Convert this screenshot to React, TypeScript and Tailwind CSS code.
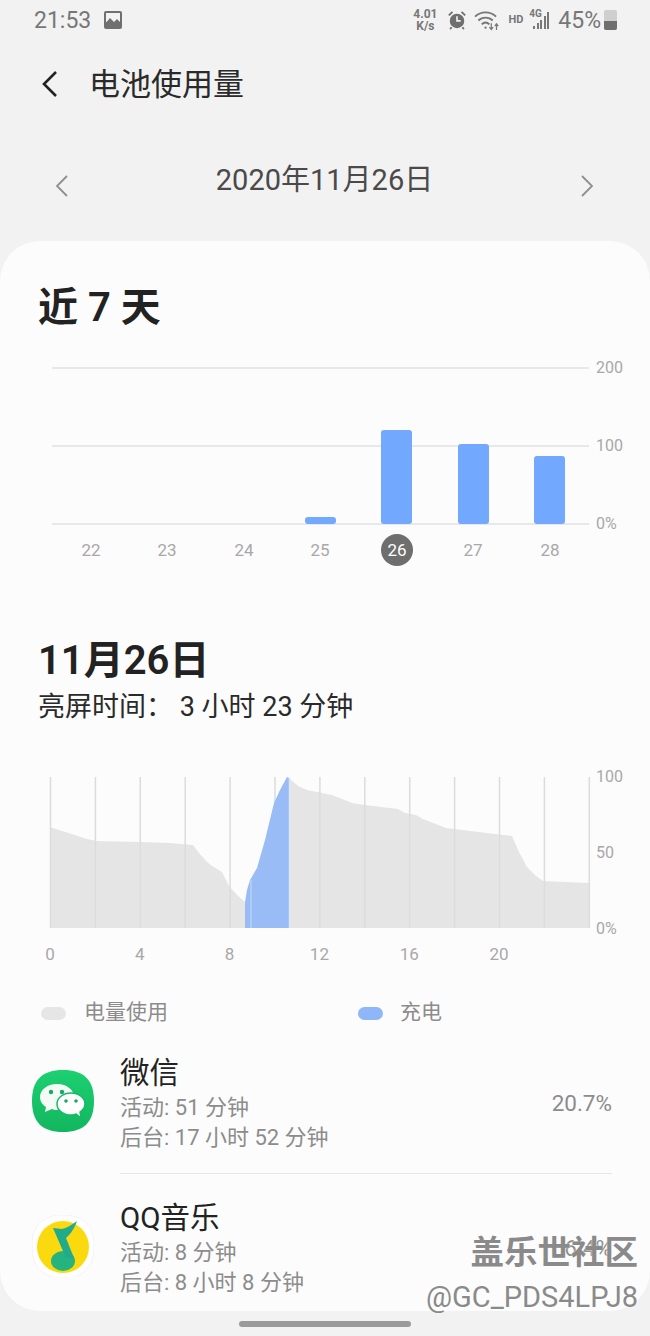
const days = [22, 23, 24, 25, 26, 27, 28];
const dayX = [91, 167, 244, 320, 397, 473, 550];
const bars = [
  { x: 305, top: 517 },
  { x: 381, top: 430 },
  { x: 458, top: 444 },
  { x: 534, top: 456 },
];
const hours = Array.from({ length: 13 }, (_, i) => 50.5 + i * 44.9);

const greyLeft =
  'M50 928 L50 827 L62 831 L75 835 L87 839 L97 841 L141 842 L170 843 L193 845 L199 853 L207 862 L212 866 L222 872 L229 886 L238 896 L245 902 L245 928 Z';
const blueArea =
  'M245 928 L245 902 L247 890 L250 880 L257 868 L265 840 L274 803 L280 790 L287 777 L289 778 L289 928 Z';
const greyRight =
  'M289 928 L289 778 L298 786 L307 790 L332 795 L342 799 L352 803 L365 805 L398 809 L405 813 L416 815 L423 819 L446 828 L470 831 L512 836 L518 850 L527 867 L536 876 L543 881 L565 882 L589 883 L589 928 Z';

function BarChart() {
  return (
    <svg viewBox="0 350 650 220" className="block w-[650px] h-[220px]">
      {[368, 446, 524].map((y) => (
        <line key={y} x1="52" x2="589" y1={y} y2={y} stroke="#e2e2e2" strokeWidth="1.5" />
      ))}
      {bars.map((b) => (
        <rect key={b.x} x={b.x} y={b.top} width="31" height={524 - b.top} rx="3" fill="#73a8ff" />
      ))}
      {[
        ['200', 368],
        ['100', 446],
        ['0%', 524],
      ].map(([t, y]) => (
        <text key={t} x="596" y={Number(y) + 5} fontSize="16" fill="#a8a8a8">
          {t}
        </text>
      ))}
      <circle cx="397" cy="550" r="16" fill="#6e6e6e" />
      {days.map((d, i) => (
        <text
          key={d}
          x={dayX[i]}
          y="556"
          fontSize="17"
          textAnchor="middle"
          fill={d === 26 ? '#ffffff' : '#a8a8a8'}
        >
          {d}
        </text>
      ))}
    </svg>
  );
}

function AreaChart() {
  return (
    <svg viewBox="0 765 650 205" className="block w-[650px] h-[205px]">
      <path d={greyLeft} fill="#e5e5e5" />
      <path d={greyRight} fill="#e5e5e5" />
      {hours.map((x) => (
        <line key={x} x1={x} x2={x} y1="777" y2="928" stroke="#dcdcdc" strokeWidth="1.5" />
      ))}
      <path d={blueArea} fill="#99bcf6" />
      <line x1="251" x2="251" y1="880" y2="928" stroke="#b9d1f8" strokeWidth="1.5" />
      <line x1="289.5" x2="289.5" y1="778" y2="928" stroke="#dbe5f6" strokeWidth="1.5" />
      {[
        ['100', 776],
        ['50', 852],
        ['0%', 928],
      ].map(([t, y]) => (
        <text key={t} x="596" y={Number(y) + 6} fontSize="16" fill="#a8a8a8">
          {t}
        </text>
      ))}
      {[0, 4, 8, 12, 16, 20].map((h) => (
        <text key={h} x={50 + h * 22.45} y="960" fontSize="17" textAnchor="middle" fill="#a8a8a8">
          {h}
        </text>
      ))}
    </svg>
  );
}

function WeChatIcon() {
  return (
    <svg viewBox="0 0 62 62" className="w-[62px] h-[62px] shrink-0">
      <defs>
        <linearGradient id="wx" x1="0" y1="0" x2="0" y2="1">
          <stop offset="0" stopColor="#1dd072" />
          <stop offset="1" stopColor="#12b65e" />
        </linearGradient>
      </defs>
      <path d="M31 0 C52 0 62 10 62 31 C62 52 52 62 31 62 C10 62 0 52 0 31 C0 10 10 0 31 0 Z" fill="url(#wx)" />
      <path
        d="M25 14 C15 14 8 20 8 27 C8 32 11 35 14 37 L13 42 L20 39 C22 40 24 40 25 40 C35 40 42 34 42 27 C42 20 35 14 25 14 Z"
        fill="#f4fbf6"
      />
      <path
        d="M39 23 C31 23 25 28 25 34 C25 40 31 45 39 45 C41 45 43 45 44 44 L49 48 L48 42 C51 40 53 37 53 34 C53 28 47 23 39 23 Z"
        fill="#ffffff"
        stroke="#14bb62"
        strokeWidth="1.5"
      />
      <circle cx="19" cy="22" r="2.2" fill="#1aa862" />
      <circle cx="30" cy="22" r="2.2" fill="#1aa862" />
      <circle cx="34" cy="31" r="1.8" fill="#1aa862" />
      <circle cx="44" cy="31" r="1.8" fill="#1aa862" />
    </svg>
  );
}

function QQMusicIcon() {
  return (
    <svg viewBox="0 0 62 62" className="w-[62px] h-[62px] shrink-0">
      <path
        d="M31 0 C50 0 62 10 62 30 C62 52 52 63 31 63 C10 63 0 52 0 30 C0 10 12 0 31 0 Z"
        fill="#ffffff"
        stroke="#f3f3f3"
      />
      <circle cx="31" cy="32" r="26" fill="#fbd90f" />
      <ellipse cx="31" cy="46" rx="12" ry="10" fill="#25b37f" />
      <path d="M21 13 L30 14 C34 13 40 10 45 6 C43 12 39 19 34 23 L42 43 L34 43 L21 13 Z" fill="#1fab8c" />
    </svg>
  );
}

function WifiIcon() {
  return (
    <svg viewBox="0 0 26 22" className="w-[25px] h-[21px]" fill="none" stroke="#777777" strokeWidth="2">
      <path d="M1 7 C7 1 17 1 23 7" />
      <path d="M4.5 11 C8.5 7 15.5 7 19.5 11" />
      <path d="M8 15 C10.5 12.5 13.5 12.5 16 15" />
      <circle cx="12" cy="18.5" r="1.2" fill="#777777" stroke="none" />
      <path d="M18 14 v6 M16 18 l2 2.5 l2 -2.5" strokeWidth="1.3" />
      <path d="M23.5 21 v-6 M21.7 17 l1.8 -2.5 l1.8 2.5" strokeWidth="1.3" />
    </svg>
  );
}

function AlarmIcon() {
  return (
    <svg viewBox="0 0 22 22" className="w-[20px] h-[20px]">
      <circle cx="11" cy="12" r="8" fill="#6f6f6f" />
      <path d="M11 7 v5 h4" stroke="#f2f2f2" strokeWidth="1.8" fill="none" />
      <path d="M2 6 L6 2 M20 6 L16 2" stroke="#6f6f6f" strokeWidth="2" />
      <path d="M5 19 L3.5 21 M17 19 L18.5 21" stroke="#6f6f6f" strokeWidth="2" />
    </svg>
  );
}

function GalleryIcon() {
  return (
    <svg viewBox="0 0 18 18" className="w-[18px] h-[18px]">
      <rect width="18" height="18" rx="2" fill="#6f6f6f" />
      <rect x="2" y="2" width="14" height="9" fill="#f2f2f2" />
      <path d="M0 14 L6 7 L10 11 L13 8 L18 13 V16 H0 Z" fill="#6f6f6f" />
    </svg>
  );
}

function SignalBars() {
  return (
    <span className="relative flex items-end gap-[1.5px] h-[18px] w-[20px] justify-end">
      <span className="absolute left-0 top-[-2px] text-[10px] leading-[10px] font-bold text-[#777777]">4G</span>
      <span className="w-[2px] h-[3px] bg-[#777777]" />
      <span className="w-[2px] h-[6px] bg-[#777777]" />
      <span className="w-[2px] h-[9px] bg-[#777777]" />
      <span className="w-[2px] h-[13px] bg-[#777777]" />
      <span className="w-[2px] h-[17px] bg-[#777777]" />
    </span>
  );
}

function StatusBar() {
  return (
    <div className="h-[40px] flex items-center justify-between pl-[34px] pr-[33px] text-[#777777]">
      <div className="flex items-center gap-[13px]">
        <span className="text-[23px] leading-none">21:53</span>
        <GalleryIcon />
      </div>
      <div className="flex items-center">
        <span className="flex flex-col items-center text-[12px] leading-[12px] font-bold w-[24px]">
          <span>4.01</span>
          <span>K/s</span>
        </span>
        <span className="ml-[10px]">
          <AlarmIcon />
        </span>
        <span className="ml-[7px]">
          <WifiIcon />
        </span>
        <span className="ml-[9px] text-[11px] font-bold">HD</span>
        <span className="ml-[6px]">
          <SignalBars />
        </span>
        <span className="ml-[9px] text-[23px] leading-none">45%</span>
        <span className="ml-[3px] w-[13px] h-[20px] flex flex-col justify-end bg-[#cfcfcf] rounded-[2px]">
          <span className="h-[9px] bg-[#6f6f6f] rounded-b-[2px]" />
        </span>
      </div>
    </div>
  );
}

function AppRow({
  name,
  active,
  bg,
  percent,
  icon,
}: {
  name: string;
  active: string;
  bg: string;
  percent: string;
  icon: React.ReactNode;
}) {
  return (
    <div className="flex items-center pl-[32px] pr-[38px]">
      <div className="w-[88px] shrink-0 pb-[6px]">{icon}</div>
      <div className="flex-1">
        <div className="text-[29.5px] leading-[36px] text-[#222222]">{name}</div>
        <div className="mt-[2px] text-[22px] leading-[30px] text-[#8c8c8c]">{active}</div>
        <div className="text-[22px] leading-[30px] text-[#8c8c8c]">{bg}</div>
      </div>
      <div className="text-[22.5px] text-[#8c8c8c]">{percent}</div>
    </div>
  );
}

export default function App() {
  return (
    <div className="relative w-[650px] h-[1336px] overflow-hidden bg-[#f2f2f2] font-['Roboto','Noto_Sans_CJK_SC',sans-serif]">
      <StatusBar />

      <div className="h-[88px] flex items-center pl-[37px]">
        <svg viewBox="0 0 24 30" className="w-[24px] h-[30px]" fill="none" stroke="#222222" strokeWidth="2.6">
          <path d="M19 3 L7 15 L19 27" />
        </svg>
        <span className="ml-[28px] text-[31px] leading-none text-[#2a2a2a]">电池使用量</span>
      </div>

      <div className="h-[113px] flex items-start justify-between pl-[50px] pr-[51px]">
        <svg viewBox="0 0 24 30" className="mt-[43px] w-[24px] h-[30px]" fill="none" stroke="#8f8f8f" strokeWidth="1.8">
          <path d="M17 5 L7 15 L17 25" />
        </svg>
        <span className="mt-[33px] text-[29px] leading-[38px] text-[#4a4a4a]">2020年11月26日</span>
        <svg viewBox="0 0 24 30" className="mt-[43px] w-[24px] h-[30px]" fill="none" stroke="#8f8f8f" strokeWidth="1.8">
          <path d="M7 5 L17 15 L7 25" />
        </svg>
      </div>

      <div className="h-[1070px] rounded-[40px] bg-[#fcfcfc] overflow-hidden">
        <h1 className="mt-[45px] pl-[38px] text-[40px] leading-[44px] font-semibold text-[#222222]">近 7 天</h1>
        <div className="mt-[20px]">
          <BarChart />
        </div>

        <h2 className="mt-[69px] pl-[38px] text-[40px] leading-[44px] font-semibold text-[#222222]">11月26日</h2>
        <p className="mt-[8px] pl-[38px] text-[27px] leading-[32px] text-[#2a2a2a]">亮屏时间： 3 小时 23 分钟</p>

        <div className="mt-[42px]">
          <AreaChart />
        </div>

        <div className="mt-[29px] h-[28px] flex items-center pl-[41px] text-[21px] text-[#8c8c8c]">
          <span className="w-[25px] h-[13px] rounded-full bg-[#e6e6e6]" />
          <span className="ml-[18px] w-[274px]">电量使用</span>
          <span className="w-[25px] h-[13px] rounded-full bg-[#8fb6f8]" />
          <span className="ml-[17px]">充电</span>
        </div>

        <div className="mt-[28px]">
          <AppRow name="微信" active="活动: 51 分钟" bg="后台: 17 小时 52 分钟" percent="20.7%" icon={<WeChatIcon />} />
          <div className="mt-[20px] mb-[26px] ml-[120px] mr-[38px] h-px bg-[#e6e6e6]" />
          <AppRow name="QQ音乐" active="活动: 8 分钟" bg="后台: 8 小时 8 分钟" percent="6.4%" icon={<QQMusicIcon />} />
        </div>
      </div>

      <div className="mt-[10px] mx-auto w-[172px] h-[6px] rounded-full bg-[#9a9a9a]" />

      <div className="absolute right-[12px] top-[1232px] flex flex-col items-end text-[#8a8a8a]">
        <span className="text-[33.5px] leading-[42px] font-bold [text-shadow:0_0_2px_#ffffff]">盖乐世社区</span>
        <span className="mt-[5px] text-[29px] leading-[36px] [text-shadow:0_0_2px_#ffffff]">@GC_PDS4LPJ8</span>
      </div>
    </div>
  );
}
